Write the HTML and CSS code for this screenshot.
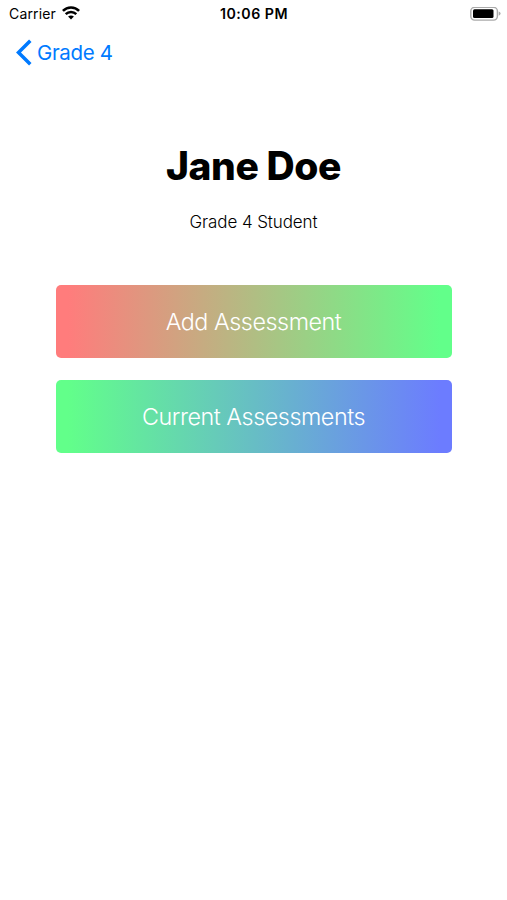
FILE: index.html
```html
<!DOCTYPE html>
<html lang="en">
<head>
  <meta charset="utf-8">
  <title>Jane Doe</title>
  <link rel="stylesheet" href="styles.css">
</head>
<body>

<div class="status-bar">
  <div class="carrier">
    <span class="carrier-name">Carrier</span>
    <svg class="wifi" width="18" height="14" viewBox="0 0 18 14">
      <path d="M0.9 4.9 C5.4 0.3 12.6 0.3 17.1 4.9" fill="none" stroke="#000" stroke-width="2.6"/>
      <path d="M3.7 8.1 C6.6 5.2 11.4 5.2 14.3 8.1" fill="none" stroke="#000" stroke-width="2.4"/>
      <path d="M6.1 10.6 C7.8 9 10.2 9 11.9 10.6 L9 13.5 Z"/>
    </svg>
  </div>
  <span class="time">10:06 PM</span>
  <svg class="battery" width="31" height="14" viewBox="0 0 31 14">
    <rect x="0.8" y="0.3" width="26.6" height="12.8" rx="3.8" fill="none" stroke="#aaa" stroke-width="1.4"/>
    <rect x="3" y="2.3" width="20.5" height="8.8" rx="1.5"/>
    <path d="M28.7 4.4 Q30.6 5 30.6 6.6 Q30.6 8.2 28.7 8.8 Z" fill="#aaa"/>
  </svg>
</div>

<a href="#" class="back">
  <svg width="16" height="27" viewBox="0 0 16 27">
    <path d="M14.3 1.7 L2.5 13.5 L14.3 25.3" fill="none" stroke="#007aff" stroke-width="3.5"/>
  </svg>
  <span class="back-label">Grade 4</span>
</a>

<div class="profile">
  <h1><span>Jane Doe</span></h1>
  <p><span>Grade 4 Student</span></p>
</div>

<div class="actions">
  <button type="button" class="add"><span>Add Assessment</span></button>
  <button type="button" class="current"><span>Current Assessments</span></button>
</div>

</body>
</html>
```
FILE: styles.css
```css
body {
  margin: 0;
  background-color: #fff;
  color: #000;
  font-family: Inter, sans-serif;
}

.status-bar {
  display: grid;
  grid-template-columns: 1fr auto 1fr;
  align-items: center;
  height: 27px;
  padding: 0 6px 0 7px;
}

.carrier {
  display: flex;
  align-items: center;
  gap: 6px;
  padding-left: 2px;
  font-size: 14px;
  letter-spacing: 0.15px;
}

.wifi {
  margin-bottom: 1px;
}

.time {
  font-size: 14.2px;
  font-weight: 600;
  letter-spacing: 0.5px;
}

.battery {
  justify-self: end;
}

.back {
  display: flex;
  align-items: center;
  gap: 5px;
  width: 120px;
  height: 50px;
  padding-left: 16px;
  color: #007aff;
  font-size: 20.5px;
  letter-spacing: -0.35px;
  text-decoration: none;
}

.profile {
  text-align: center;
}

h1 {
  margin: 65px 0 0;
  font-size: 39px;
  font-weight: 800;
  letter-spacing: -0.4px;
  line-height: 48px;
}

p {
  margin: 21px 0 0;
  font-size: 17px;
  font-weight: 300;
  letter-spacing: -0.1px;
  line-height: 22px;
}

.actions {
  display: flex;
  flex-direction: column;
  gap: 22px;
  margin: 52px 55px 0 56px;
}

button {
  height: 73px;
  padding: 0 1px 0 0;
  border: none;
  border-radius: 5px;
  color: #fff;
  font-family: inherit;
  font-size: 23.3px;
  font-weight: 300;
  letter-spacing: -0.45px;
}

.add {
  background: linear-gradient(to right, #ff7c7c 3%, #62ff8a 97%);
}

.current {
  background: linear-gradient(to right, #62ff8a 3%, #6c7cff 97%);
}
```
